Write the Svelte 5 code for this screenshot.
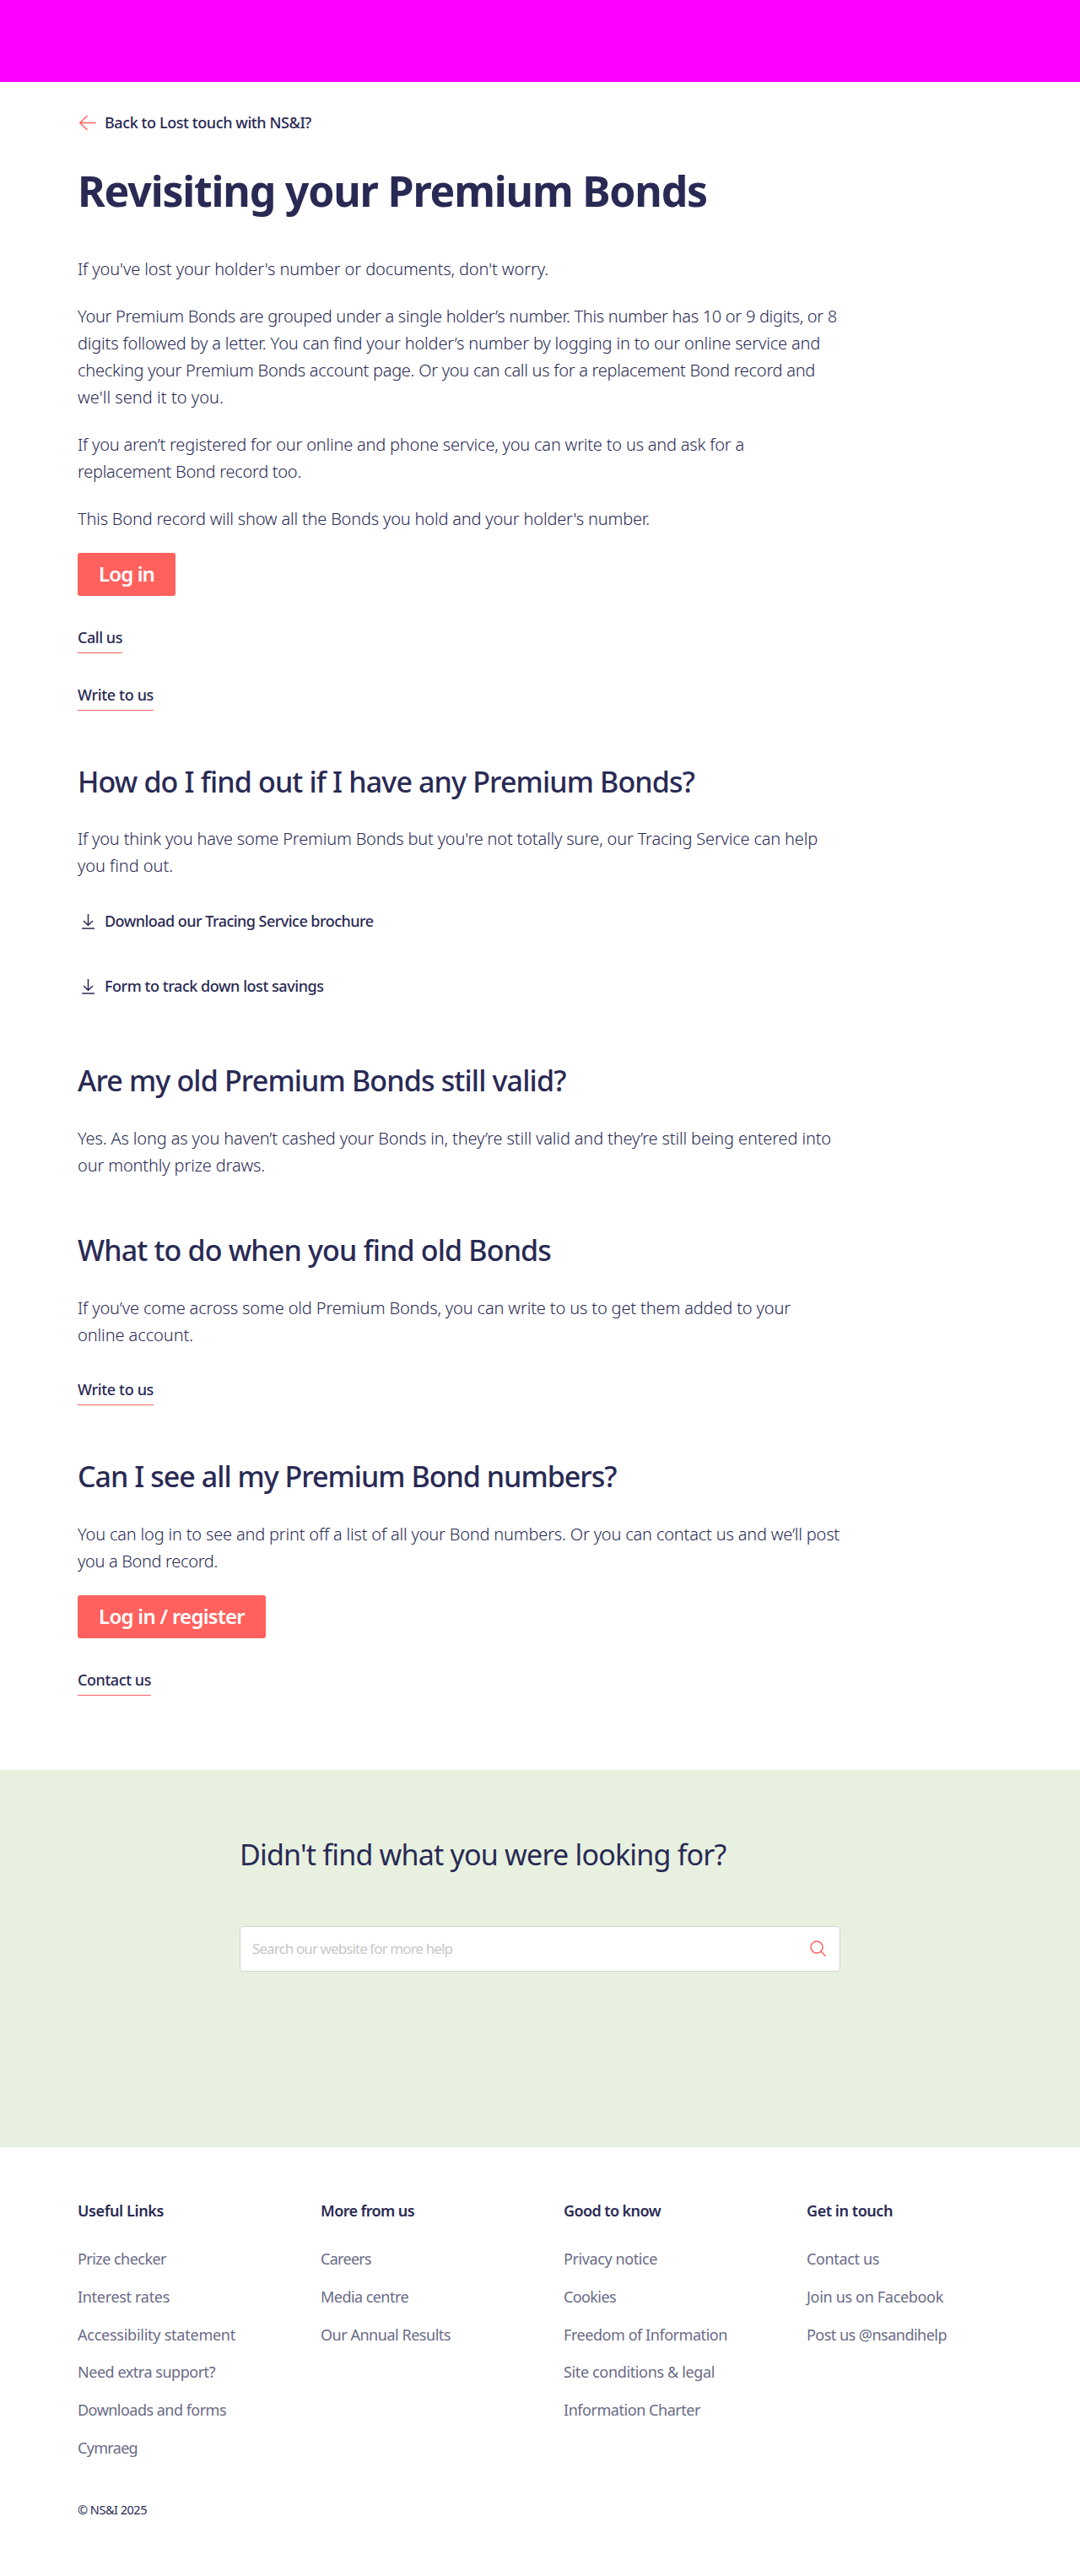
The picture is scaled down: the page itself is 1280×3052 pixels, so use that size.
<script>
  // Adjusts tracking so that a line of copy sets to its intended measure (px).
  function fit(node, measure) {
    node.style.letterSpacing = '0px';
    const natural = node.getBoundingClientRect().width;
    node.style.letterSpacing = `${(measure - natural) / node.textContent.length}px`;
  }

  const intro = [
    [["If you've lost your holder's number or documents, don't worry.", 558]],
    [
      ['Your Premium Bonds are grouped under a single holder’s number. This number has 10 or 9 digits, or 8', 900],
      ['digits followed by a letter. You can find your holder’s number by logging in to our online service and', 880],
      ['checking your Premium Bonds account page. Or you can call us for a replacement Bond record and', 874],
      ["we'll send it to you.", 173]
    ],
    [
      ['If you aren’t registered for our online and phone service, you can write to us and ask for a', 790],
      ['replacement Bond record too.', 265]
    ],
    [["This Bond record will show all the Bonds you hold and your holder's number.", 678]]
  ];

  const sections = [
    {
      title: ['How do I find out if I have any Premium Bonds?', 731],
      lines: [
        ["If you think you have some Premium Bonds but you're not totally sure, our Tracing Service can help", 877],
        ['you find out.', 113]
      ],
      downloads: [
        ['Download our Tracing Service brochure', 318.5],
        ['Form to track down lost savings', 259.5]
      ]
    },
    {
      title: ['Are my old Premium Bonds still valid?', 578.5],
      lines: [
        ['Yes. As long as you haven’t cashed your Bonds in, they’re still valid and they’re still being entered into', 893],
        ['our monthly prize draws.', 222]
      ]
    },
    {
      title: ['What to do when you find old Bonds', 561],
      lines: [
        ['If you’ve come across some old Premium Bonds, you can write to us to get them added to your', 845],
        ['online account.', 137]
      ],
      link: ['Write to us', 90]
    },
    {
      title: ['Can I see all my Premium Bond numbers?', 638.5],
      lines: [
        ['You can log in to see and print off a list of all your Bond numbers. Or you can contact us and we’ll post', 903],
        ['you a Bond record.', 166]
      ],
      button: ['Log in / register', 173],
      link: ['Contact us', 87]
    }
  ];

  const columns = [
    {
      title: ['Useful Links', 102],
      links: [['Prize checker', 105], ['Interest rates', 109], ['Accessibility statement', 187], ['Need extra support?', 163], ['Downloads and forms', 176], ['Cymraeg', 71]]
    },
    { title: ['More from us', 111], links: [['Careers', 60], ['Media centre', 104], ['Our Annual Results', 154]] },
    {
      title: ['Good to know', 115],
      links: [['Privacy notice', 111], ['Cookies', 62], ['Freedom of Information', 194], ['Site conditions & legal', 179], ['Information Charter', 162]]
    },
    { title: ['Get in touch', 102], links: [['Contact us', 86], ['Join us on Facebook', 162], ['Post us @nsandihelp', 166]] }
  ];
</script>

{#snippet text([copy, measure])}<span class="line" use:fit={measure}>{copy}</span>{/snippet}

<div class="banner"></div>

<main>
  <a class="back" href="#back">
    <svg width="22" height="22" viewBox="0 0 22 22"><path d="M20.500 11.500H2M10.500 3 1.800 11.500l8.700 8.500" /></svg>
    {@render text(['Back to Lost touch with NS&I?', 245])}
  </a>
  <h1>{@render text(['Revisiting your Premium Bonds', 746])}</h1>

  <div class="copy">
    {#each intro as lines}
      <p>{#each lines as line}{@render text(line)}{/each}</p>
    {/each}
  </div>
  <a class="button" href="#login">{@render text(['Log in', 66])}</a>
  <a class="link after-button" href="#call">{@render text(['Call us', 53])}</a>
  <a class="link after-button" href="#write">{@render text(['Write to us', 90])}</a>

  {#each sections as s}
    <section>
      <h2>{@render text(s.title)}</h2>
      <p class:tight={s.downloads}>{#each s.lines as line}{@render text(line)}{/each}</p>
      {#if s.downloads}
        <div class="downloads">
          {#each s.downloads as d}
            <a class="download" href="#download">
              <svg width="22" height="22" viewBox="0 0 22 22"><path d="M11.500 3v13M6 11l5.500 5.200L17 11" /><path d="M4.200 20h14.800" /></svg>
              {@render text(d)}
            </a>
          {/each}
        </div>
      {/if}
      {#if s.button}<a class="button" href="#login">{@render text(s.button)}</a>{/if}
      {#if s.link}<a class="link" class:after-button={s.button} href="#contact">{@render text(s.link)}</a>{/if}
    </section>
  {/each}
</main>

<div class="help">
  <h2>{@render text(["Didn't find what you were looking for?", 576.5])}</h2>
  <div class="search">
    {@render text(['Search our website for more help', 237])}
    <svg width="22" height="22" viewBox="0 0 22 22"><circle cx="9" cy="9" r="7" /><path d="m14 14 5.500 5.500" /></svg>
  </div>
</div>

<footer>
  <div class="columns">
    {#each columns as c}
      <div>
        <h3>{@render text(c.title)}</h3>
        <ul>
          {#each c.links as l}<li><a href="#footer">{@render text(l)}</a></li>{/each}
        </ul>
      </div>
    {/each}
  </div>
  <small>{@render text(['© NS&I 2025', 82])}</small>
</footer>

<style>
  :global(body) {
    margin: 0;
    background: #fff;
    color: #292a54;
    font-family: 'Noto Sans', 'Open Sans', sans-serif;
  }
  h1, h2, h3, p, ul { margin: 0; padding: 0; }
  a { color: inherit; text-decoration: none; }
  svg { flex: none; fill: none; stroke: #ff615e; stroke-width: 1.5; }
  .line { display: block; width: max-content; white-space: nowrap; }

  .banner { height: 97px; background: #f0f; }
  main { display: flex; flex-direction: column; align-items: flex-start; padding: 34px 92px 88px; }

  .back, .download { display: flex; align-items: center; gap: 9px; font-size: 18px; line-height: 28px; font-weight: 500; padding-left: 1px; }
  h1 { margin-top: 35px; font-size: 50px; line-height: 64px; font-weight: 700; }

  .copy { margin-top: 45px; display: flex; flex-direction: column; gap: 24px; }
  p { font-size: 20px; line-height: 32px; font-weight: 300; }

  .button {
    margin-top: 24px;
    padding: 0 25px 2px;
    border-radius: 3px;
    background: #ff615e;
    color: #fff;
    font-size: 24px;
    line-height: 49px;
    font-weight: 600;
  }
  .link { margin-top: 34px; padding-bottom: 4px; border-bottom: 1px solid #ff615e; font-size: 18px; line-height: 28px; font-weight: 500; }
  .link.after-button { margin-top: 35px; }

  section { display: flex; flex-direction: column; align-items: flex-start; margin-top: 62px; }
  h2 { font-size: 34px; line-height: 44px; font-weight: 500; }
  section p { margin-top: 31px; }
  section p.tight { margin-top: 30px; }
  .downloads { display: flex; flex-direction: column; gap: 49px; margin: 35px 0 14px; }
  .download svg { stroke: #292a54; }

  .help { box-sizing: border-box; height: 447px; padding: 78px 284px 0; background: #e8f1e0; }
  .help h2 { font-weight: 400; }
  .search {
    box-sizing: border-box;
    display: flex;
    align-items: center;
    justify-content: space-between;
    height: 54px;
    margin-top: 63px;
    padding: 0 14px 0 14px;
    border: 1px solid #d0d7ca;
    border-radius: 4px;
    background: #fff;
    color: #c8c8c8;
    font-size: 17px;
    line-height: 26px;
    font-weight: 400;
  }

  footer { padding: 61px 92px 0; }
  .columns { display: grid; grid-template-columns: repeat(4, 288px); }
  h3 { font-size: 18px; line-height: 28px; font-weight: 600; }
  ul { display: flex; flex-direction: column; gap: 16.8px; margin-top: 29px; list-style: none; font-size: 18px; line-height: 28px; color: #6a6b87; }
  small { display: block; margin-top: 48px; font-size: 14.5px; line-height: 22px; }
</style>
